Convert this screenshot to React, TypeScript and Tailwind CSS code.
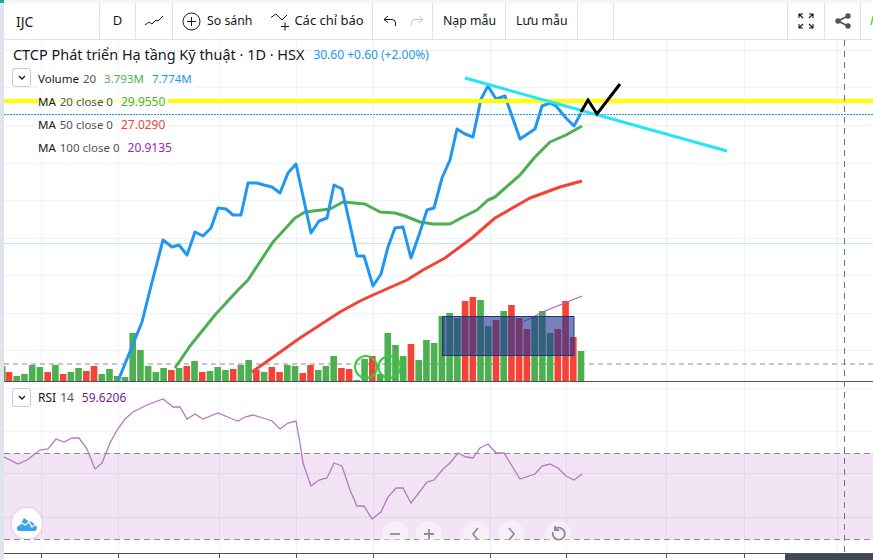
const font = { fontFamily: '"Noto Sans", "Open Sans", sans-serif' };

// [top of bar, is red] - bars are spaced 7.73px, baseline at y=381
const volumes: [number, number][] = [
  [372, 1], [376, 0], [374, 0], [365, 0], [367, 0], [372, 1], [365, 0], [374, 1], [372, 0], [368, 0],
  [371, 1], [366, 1], [374, 0], [369, 0], [376, 0], [377, 0], [333, 0], [350, 0], [366, 0], [372, 0],
  [368, 0], [370, 1], [368, 0], [366, 1], [361, 0], [372, 1], [371, 0], [367, 0], [370, 0], [369, 1],
  [365, 0], [360, 0], [370, 1], [372, 0], [367, 1], [372, 1], [365, 0], [366, 0], [373, 1], [365, 1],
  [370, 0], [366, 0], [356, 0], [368, 1], [369, 1], [380, 0], [359, 0], [356, 1], [374, 0], [333, 0],
  [345, 0], [356, 0], [344, 1], [360, 0], [340, 0], [343, 0], [316, 0], [313, 0], [318, 0], [301, 1],
  [297, 1], [300, 0], [326, 0], [320, 1], [311, 0], [305, 1], [318, 1], [329, 1], [316, 0], [311, 0],
  [333, 0], [329, 1], [301, 1], [337, 1], [351, 0],
];

const price =
  "118,381 142,322 150,290 163,240 172,247 179,245 187,255 195,232 203,236 211,228 218,208 226,209 233,215 241,215 248,183 257,183 264,185 272,187 280,193 288,173 296,164 311,233 319,221 327,218 334,185 342,189 357,256 364,256 373,286 381,274 388,247 395,228 403,227 411,258 419,235 427,210 434,208 442,178 450,160 457,129 465,134 473,137 481,99 488,86 496,99 505,96 520,139 535,129 542,106 550,103 556,106 566,118 574,126 581,113";
const ma20 =
  "175,368 190,346 215,315 238,290 248,280 273,242 295,218 305,212 330,209 343,202 365,204 380,212 395,213 405,216 420,222 433,224 450,224 463,217 477,210 488,200 495,197 520,175 535,157 550,142 566,135 582,126";
const ma50 =
  "252,372 300,338 340,312 360,301 373,295 407,280 423,270 445,258 472,238 495,218 530,198 560,187 582,181";
const rsi =
  "4,457 18,464 27,460 40,450 48,449 56,439 64,442 72,438 79,438 87,449 95,469 102,463 110,443 117,430 125,419 133,412 147,405 163,399 173,407 180,407 187,419 195,414 203,419 218,413 230,418 238,421 245,417 253,415 263,418 272,421 280,429 288,423 296,421 300,443 303,463 311,486 319,480 327,478 334,463 342,466 350,490 357,506 364,506 372,519 381,512 388,497 396,488 403,488 411,503 427,482 434,480 443,469 450,463 458,453 466,457 473,458 480,448 488,444 496,453 504,453 520,479 535,474 542,466 550,464 558,468 566,476 574,480 582,474";

const gridX = [41, 118, 219, 296, 373, 490, 566, 666, 744, 837];
const gridY = [50, 87, 125, 163, 200, 238, 275, 313, 350, 388, 431, 473, 517];

function Chart() {
  return (
    <svg viewBox="4 40 869 520" className="block h-[520px] w-[869px]">
      {gridX.map((x) => (
        <line key={x} x1={x + 0.5} x2={x + 0.5} y1="40" y2="553" stroke="#eef2f8" />
      ))}
      {gridY.map((y) => (
        <line key={y} x1="4" x2="873" y1={y + 0.5} y2={y + 0.5} stroke="#f0f3f8" strokeWidth="1.5" />
      ))}

      {/* rsi band */}
      <rect x="4" y="453" width="869" height="86" fill="#a040b0" fillOpacity="0.14" />
      <line x1="4" x2="873" y1="453.5" y2="453.5" stroke="#8f8a94" strokeDasharray="6 4" />
      <line x1="4" x2="873" y1="539.5" y2="539.5" stroke="#8f8a94" strokeDasharray="6 4" />
      <polyline points={rsi} fill="none" stroke="#b678c0" strokeWidth="1.3" />

      {/* volume */}
      <line x1="4" x2="873" y1="364" y2="364" stroke="#8a8d96" strokeDasharray="5 4" />
      <rect x="4" y="366" width="1.5" height="15" fill="#4caf50" />
      {volumes.map(([top, red], i) => (
        <rect
          key={i}
          x={5.7 + i * 7.73}
          y={top}
          width="6.6"
          height={381 - top}
          fill={red ? "#f44336" : "#4caf50"}
        />
      ))}
      <polyline points="523,322 545,311 582,296" fill="none" stroke="#a860c8" strokeWidth="1.3" />
      <rect
        x="442.5"
        y="316.5"
        width="131.5"
        height="39"
        fill="#243694"
        fillOpacity="0.62"
        stroke="#1c3c78"
      />
      <circle cx="366" cy="367" r="11" fill="none" stroke="#35c93f" strokeWidth="2" />
      <circle cx="389.500" cy="367" r="11" fill="none" stroke="#35c93f" strokeWidth="2" />
      <text x="366" y="371" textAnchor="middle" fontSize="10" fill="#35c93f">E</text>
      <text x="389.500" y="371" textAnchor="middle" fontSize="10" fill="#35c93f">E</text>
      <line x1="4" x2="873" y1="381.5" y2="381.5" stroke="#50535e" />

      {/* drawings */}
      <line x1="4" x2="873" y1="243.5" y2="243.5" stroke="#c2e4ec" />
      <polyline points={ma50} fill="none" stroke="#f44336" strokeWidth="3" strokeLinejoin="round" />
      <polyline points={ma20} fill="none" stroke="#4caf50" strokeWidth="3" strokeLinejoin="round" />
      <polyline points={price} fill="none" stroke="#2196f3" strokeWidth="3" strokeLinejoin="round" />
      <line x1="4" x2="873" y1="101" y2="101" stroke="#ffff00" strokeWidth="4" />
      <line x1="4" x2="873" y1="114.5" y2="114.5" stroke="#2196f3" strokeDasharray="2 1" />
      <line x1="465" y1="78" x2="727" y2="151" stroke="#22e6f5" strokeWidth="3" />
      <polyline points="581,112 588,100 597,114 620,84" fill="none" stroke="#000" strokeWidth="3" />
      <line x1="844.5" x2="844.5" y1="40" y2="560" stroke="#70737c" strokeDasharray="6 5" />

      {/* time axis */}
      <line x1="4" x2="873" y1="553.5" y2="553.5" stroke="#50535e" />
      {gridX.slice(0, 9).map((x) => (
        <line key={x} x1={x + 0.5} x2={x + 0.5} y1="553" y2="558" stroke="#50535e" />
      ))}
      <rect x="785" y="554" width="88" height="6" fill="#434855" />
    </svg>
  );
}

function ToolCell({ width, children }: { width: string; children?: React.ReactNode }) {
  return <div className={`flex h-full shrink-0 items-center border-r border-[#e0e3eb] ${width}`}>{children}</div>;
}

function Legend({ label, dim, values }: { label: string; dim: string; values: [string, string][] }) {
  return (
    <div className="flex h-[23px] items-center">
      <div className="flex h-[18px] items-center bg-white/75 pr-[3px] text-[12px] text-[#131722]">
        <span className="text-[11.5px]">{label}</span>
        <span className="ml-1 text-[11.5px] text-[#50535e]">{dim}</span>
        {values.map(([value, color]) => (
          <span key={value} className={`ml-[8px] ${color}`}>
            {value}
          </span>
        ))}
      </div>
    </div>
  );
}

function Chevron({ className }: { className: string }) {
  return (
    <div className={`absolute flex h-[19px] w-[19px] items-center justify-center rounded-[3px] border border-[#c9ccd4] bg-white ${className}`}>
      <svg width="10" height="6" viewBox="0 0 10 6" fill="none" stroke="#131722" strokeWidth="1.3">
        <path d="M2 1l3 3 3-3" />
      </svg>
    </div>
  );
}

function RoundButton({ className, children }: { className: string; children: React.ReactNode }) {
  return (
    <div className={`absolute flex h-[26px] w-[26px] items-center justify-center rounded-full bg-white/40 ${className}`}>
      <svg width="16" height="16" viewBox="0 0 16 16" fill="none" stroke="#8e8c98" strokeWidth="1.8">
        {children}
      </svg>
    </div>
  );
}

export default function App() {
  return (
    <div className="flex h-[560px] w-[873px] overflow-hidden bg-white" style={font}>
      <div className="w-1 shrink-0 bg-[#e0e3eb]">
        <div className="h-[3px] bg-[#26a69a]" />
      </div>

      <div className="relative flex w-[869px] flex-col">
        <div className="h-[3px] bg-[#f5f6f8]" />
        <div className="flex h-[37px] items-center border-b border-[#e0e3eb] text-[13px] text-[#131722]">
          <ToolCell width="w-[96px]">
            <span className="pl-3 text-[14px]">IJC</span>
          </ToolCell>
          <ToolCell width="w-[36px]">
            <span className="w-full text-center">D</span>
          </ToolCell>
          <ToolCell width="w-[37px]">
            <svg className="mx-auto" width="22" height="14" viewBox="0 0 22 14" fill="none" stroke="#131722" strokeWidth="1">
              <path d="M2 11l4-3 3 2 4-4 2 1 5-5" />
            </svg>
          </ToolCell>
          <ToolCell width="w-[200px]">
            <svg className="ml-[9px]" width="19" height="19" viewBox="0 0 19 19" fill="none" stroke="#131722" strokeWidth="1">
              <circle cx="9.5" cy="9.5" r="8.5" />
              <path d="M9.5 5v9M5 9.5h9" />
            </svg>
            <span className="ml-[6px] text-[12.3px]">So sánh</span>
            <svg className="ml-[18px]" width="22" height="20" viewBox="0 0 22 20" fill="none" stroke="#131722" strokeWidth="1">
              <path d="M1 6.500l5-3.500 6 6 5-5M15 11.500v8M11 15.500h8" />
            </svg>
            <span className="ml-[2px]">Các chỉ báo</span>
          </ToolCell>
          <ToolCell width="w-[60px]">
            <svg className="ml-[10px]" width="14" height="12" viewBox="0 0 14 12" fill="none" stroke="#131722" strokeWidth="1">
              <path d="M5 1L1 4.500l4 3M1 4.500h8a3.500 3.500 0 0 1 3.500 3.500v3" />
            </svg>
            <svg className="ml-[13px]" width="14" height="12" viewBox="0 0 14 12" fill="none" stroke="#c4c6cc" strokeWidth="1">
              <path d="M9 1l4 3.500-4 3M13 4.500H5A3.500 3.500 0 0 0 1.500 8v3" />
            </svg>
          </ToolCell>
          <ToolCell width="w-[73px]">
            <span className="pl-[10px] text-[12.3px]">Nạp mẫu</span>
          </ToolCell>
          <ToolCell width="w-[72px]">
            <span className="pl-[10px] text-[12.3px]">Lưu mẫu</span>
          </ToolCell>
          <ToolCell width="w-[36px]" />
          <ToolCell width="w-[174px]" />
          <ToolCell width="w-[37px]">
            <svg className="mx-auto" width="16" height="16" viewBox="0 0 16 16" fill="none" stroke="#131722" strokeWidth="1.100">
              <path d="M1 5V1h4M1 1l4 4M11 1h4v4M15 1l-4 4M1 11v4h4M1 15l4-4M15 11v4h-4M15 15l-4-4" />
            </svg>
          </ToolCell>
          <ToolCell width="w-[36px]">
            <svg className="mx-auto" width="16" height="16" viewBox="0 0 16 16" fill="#50535e" stroke="#50535e" strokeWidth="1.800">
              <path d="M13 3L3 8l10 5" fill="none" />
              <circle cx="13" cy="3" r="1.800" />
              <circle cx="3" cy="8" r="1.800" />
              <circle cx="13" cy="13" r="1.800" />
            </svg>
          </ToolCell>
          <span className="ml-[9px] text-[13px] italic text-[#22c32e]">M</span>
        </div>

        <Chart />

        {/* legends over the chart */}
        <div className="absolute left-[9px] top-[43px]">
          <div className="flex h-[23px] items-center text-[14.45px] text-[#131722]">
            <span>CTCP Phát triển Hạ tầng Kỹ thuật · 1D · HSX</span>
            <span className="ml-[9px] text-[12px] text-[#2196f3]">30.60 +0.60 (+2.00%)</span>
          </div>
          <div className="ml-[25px] mt-px">
            <Legend label="Volume" dim="20" values={[["3.793M", "text-[11.5px] text-[#4caf50]"], ["7.774M", "text-[11.5px] text-[#2196f3]"]]} />
            <Legend label="MA" dim="20 close 0" values={[["29.9550", "text-[#4caf50]"]]} />
            <Legend label="MA" dim="50 close 0" values={[["27.0290", "text-[#f44336]"]]} />
            <Legend label="MA" dim="100 close 0" values={[["20.9135", "text-[#9c27b0]"]]} />
          </div>
        </div>
        <Chevron className="left-[8px] top-[68px]" />
        <Chevron className="left-[8px] top-[388px]" />
        <div className="absolute left-[34px] top-[386px] flex h-[23px] items-center text-[12px] text-[#131722]">
          RSI<span className="ml-1 text-[#50535e]">14</span>
          <span className="ml-[8px] text-[#7b1a8f]">59.6206</span>
        </div>

        {/* logo button */}
        <div className="absolute left-[8px] top-[508px] flex h-[31px] w-[30px] items-center justify-center rounded-full bg-white shadow-[0_0_3px_rgba(0,0,0,0.15)]">
          <svg width="22" height="14" viewBox="0 0 22 14">
            <path d="M1 10l4-4 3-5 4 3 4 1 4 4a3 3 0 0 1-1 5H3a3 3 0 0 1-2-4z" fill="#3ba3ee" />
            <path d="M1 9l5-3 3 2 4-3 3 5 4-3" fill="none" stroke="#fff" strokeWidth="1.300" />
          </svg>
        </div>

        {/* zoom / scroll buttons */}
        <RoundButton className="left-[378px] top-[521px]">
          <path d="M3 8h10" />
        </RoundButton>
        <RoundButton className="left-[412px] top-[521px]">
          <path d="M3 8h10M8 3v10" />
        </RoundButton>
        <RoundButton className="left-[459px] top-[521px]">
          <path d="M10 2L5 8l5 6" />
        </RoundButton>
        <RoundButton className="left-[494px] top-[521px]">
          <path d="M6 2l5 6-5 6" />
        </RoundButton>
        <RoundButton className="left-[541px] top-[521px]">
          <path d="M5 3a6 6 0 1 1-2 3M5 0v4h4" />
        </RoundButton>
      </div>
    </div>
  );
}
